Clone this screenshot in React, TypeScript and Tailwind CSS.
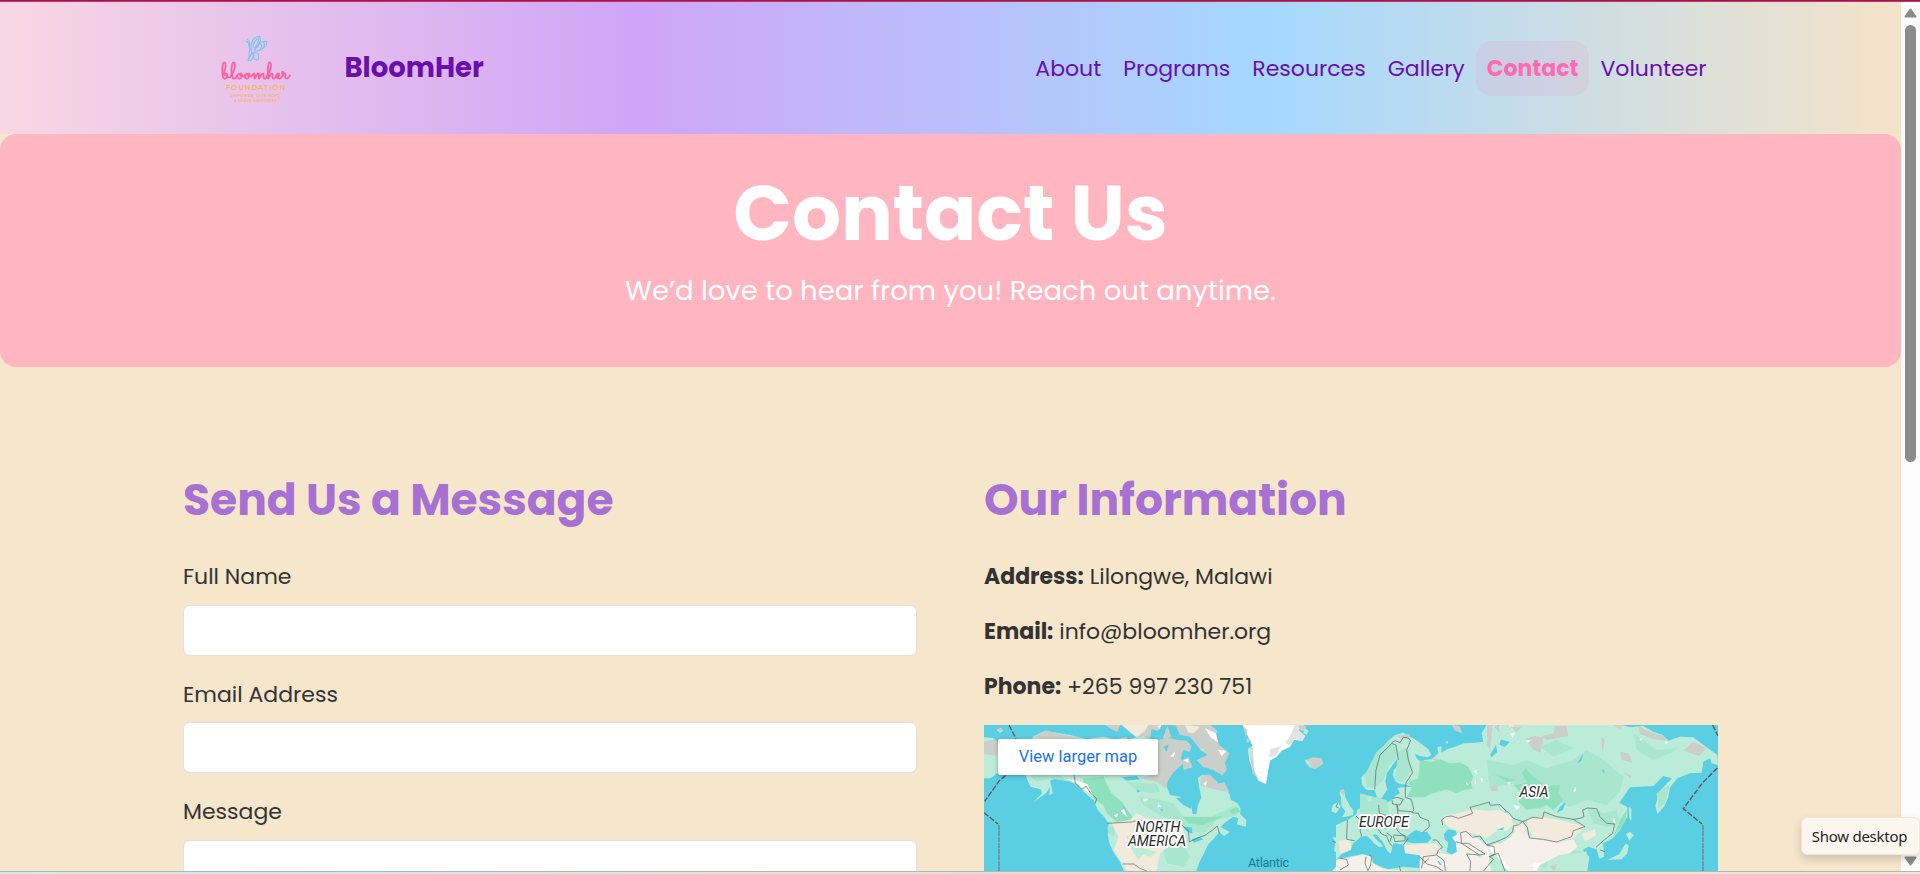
import type { ReactNode } from 'react';

const navItems = [
  { label: 'About', active: false },
  { label: 'Programs', active: false },
  { label: 'Resources', active: false },
  { label: 'Gallery', active: false },
  { label: 'Contact', active: true },
  { label: 'Volunteer', active: false },
];

function Logo() {
  return (
    <div className="flex w-[70px] shrink-0 flex-col items-center">
      <svg className="ml-[2px] h-[27px] w-[23px]" viewBox="0 0 69 81" fill="none" stroke="#74c6f4" strokeWidth="3.2" strokeLinecap="round" strokeLinejoin="round">
        <path d="M18 42C16 24 26 6 42 3C50 10 46 28 28 46" />
        <path d="M24 38C24 24 32 13 40 10C43 20 36 30 29 38" />
        <path d="M28 46C36 30 50 18 65 19C67 32 54 46 32 49" />
        <path d="M46 26C52 28 50 40 44 45M56 22C60 28 58 34 54 38" />
        <path d="M28 52C40 50 43 60 40 72C36 79 28 76 26 66C25 60 26 56 28 52Z" />
        <path d="M24 52C20 58 12 66 9 76C20 79 26 70 25 56" />
        <path d="M15 38C13 48 12 60 12 70M18 42C20 48 21 52 20 58" />
        <path d="M13 36C12 28 10 22 4 19M14 35C15 26 12 18 8 14" />
      </svg>
      <div className="h-[22px] whitespace-nowrap pt-[2px] font-['Sacramento','Dancing_Script',cursive] text-[23.8px] font-bold leading-[22px] text-[#fb62a0]">
        bloomher
      </div>
      <div className="ml-[1px] whitespace-nowrap font-['Montserrat','Lato',sans-serif] text-[7px] font-semibold leading-[7px] tracking-[1px] text-[#fdb260]">
        FOUNDATION
      </div>
      <div className="mt-[2px] whitespace-nowrap text-center font-['Lato',sans-serif] text-[4px] font-bold leading-[5px] tracking-[0.3px] text-[#fab36e]">
        EMPOWER, GIVE HOPE
        <br />
        &amp; LEAVE MEMORIES
      </div>
    </div>
  );
}

function Header() {
  return (
    <header className="h-[132px] bg-[linear-gradient(90deg,#f8d7e3_0%,#d0a5f7_33.3%,#a5d8ff_66.6%,#f5e3c8_100%)]">
      <div className="mx-auto flex h-full w-[1534px] items-start justify-between">
        <div className="flex items-start pl-[37px]">
          <div className="pt-[33px]">
            <Logo />
          </div>
          <span className="ml-[54px] mt-[49px] text-[27.5px] font-bold leading-[34px] text-[#6a0dad]">BloomHer</span>
        </div>
        <nav className="mt-[39px] flex">
          {navItems.map((item) => (
            <a
              key={item.label}
              className={
                item.active
                  ? 'rounded-2xl bg-[#ff69b4]/10 px-[11px] py-[9.5px] text-[22px] font-bold leading-9 text-[#ff69b4]'
                  : 'px-[11px] py-[9.5px] text-[22px] leading-9 text-[#6a0dad]'
              }
            >
              {item.label}
            </a>
          ))}
        </nav>
      </div>
    </header>
  );
}

function Hero() {
  return (
    <section className="flex h-[233px] flex-col items-center rounded-2xl bg-[#ffb6c1] pt-[33px] text-white">
      <h1 className="text-[77px] font-bold leading-[92px]">Contact Us</h1>
      <p className="mt-[9px] text-[27.5px] leading-[46px]">We’d love to hear from you! Reach out anytime.</p>
    </section>
  );
}

function Field({ label, children }: { label: string; children: ReactNode }) {
  return (
    <label className="mb-[21px] block">
      <span className="mb-[9.5px] block leading-9">{label}</span>
      {children}
    </label>
  );
}

function WorldMap() {
  return (
    <svg className="block h-[146px] w-[734px]" viewBox="0 0 734 146" preserveAspectRatio="xMinYMin slice">
      <rect width="734" height="146" fill="#5acfe4" />
      {/* Americas and the Atlantic */}
      <g transform="scale(.33333) translate(-42 -45)">
        <path fill="#bbecd9" d="M42 82L70 84L86 100L84 140L86 186L62 205L42 205ZM80 60L92 54L100 62L90 68Z" />
        <path fill="#cbcfca" d="M42 95L72 88L90 104L80 138L42 132ZM80 58L95 54L98 62L86 66Z" />
        <path fill="#bbecd9" d="M188 80L225 62L300 75L350 88L400 80L450 92L520 78L560 95L575 130L565 190L588 225L600 255L640 262L664 285L668 312L679 312L684 285L694 262L688 235L684 205L694 195L720 200L735 225L748 220L765 232L778 252L783 270L802 280L812 296L810 312L829 330L828 350L800 343L806 325L790 320L764 338L752 352L780 366L762 378L748 366L730 388L715 402L702 430L690 452L678 484L462 484L450 455L432 430L418 400L413 372L416 340L400 318L382 298L372 272L345 248L315 222L285 206L262 203L240 212L249 250L238 256L240 232L228 250L192 275L216 250L212 238L182 230L172 210L165 190L180 150L188 120Z" />
        <path fill="#cbcfca" d="M190 82L225 62L265 70L340 88L220 86ZM560 90L600 85L625 90L650 92L664 108L660 125L640 120L632 145L642 158L612 185L595 210L588 235L560 215L510 205L560 190ZM405 45L450 45L442 66L425 58ZM480 45L575 45L565 62L545 58L540 85L520 78L505 82ZM578 85L592 48L604 80L590 88ZM616 45L720 45L742 62L735 80L748 105L778 130L765 158L770 180L758 196L740 186L722 176L700 172L680 150L712 135L690 118L660 80L630 75ZM638 150L655 140L668 172L640 180ZM705 160L740 156L752 172L720 178ZM694 195L720 194L738 212L746 222L762 216L778 245L750 242L690 226ZM440 88L470 80L472 88Z" />
        <path fill="#f2eadc" d="M455 45L535 45L525 62L500 82L482 68ZM560 48L574 45L570 58ZM645 45L690 50L670 70L655 68Z" />
        <path fill="#8fe0bd" d="M338 205L400 200L425 250L455 275L490 325L520 330L440 335L412 312L400 285L372 268L345 230Z" />
        <path fill="#a8e6cf" d="M470 215L560 222L570 245L540 250L500 240ZM505 258L560 268L610 280L640 320L720 322L790 288L808 292L800 315L740 330L700 372L655 360L560 310L520 285ZM600 390L640 405L660 440L640 470L590 460L580 420ZM180 195L260 190L300 215L240 205L200 215ZM412 350L440 352L430 378L415 370Z" />
        <path fill="#8fe0bd" d="M640 320L720 322L760 318L700 345L655 340ZM778 302L800 290L812 305L790 314Z" />
        <path fill="#f2eadc" d="M425 340L480 330L500 310L530 325L640 345L640 395L600 405L570 430L560 484L470 484L458 462L432 420L445 380Z" />
        <path fill="#bbecd9" d="M470 375L500 410L560 425L540 440L520 432L505 450L490 425L475 400Z" />
        <path fill="#5acfe4" d="M580 110L596 104L590 125ZM640 200L656 185L648 196ZM618 265L655 258L668 285L662 296L640 285ZM638 350L665 352L668 372L652 366ZM665 388L690 380L700 388L672 398ZM448 158L470 168L458 172ZM455 202L500 198L510 208L470 212ZM500 238L512 244L502 248ZM570 296L582 300L574 304ZM458 285L470 306L462 302Z" />
        <path fill="#fff" d="M280 205L320 212L352 222L372 262L345 240L318 218ZM462 296L472 322L452 302ZM640 150L655 146L655 158ZM745 120L770 122L755 138ZM705 55L738 70L745 98L722 82ZM520 265L536 268L522 276ZM565 282L574 290L562 292ZM700 222L710 212L708 228ZM430 315L445 312L440 322ZM600 140L615 125L612 140Z" />
        <path fill="#fff" d="M818 45L1002 45L985 60L1005 78L998 92L972 90L960 110L935 122L920 140L900 152L895 180L888 222L866 212L850 185L838 150L835 118L848 108L835 82Z" />
        <path fill="#e2e3e3" d="M975 45L1002 45L985 60L1005 78L998 92L972 88L945 100L960 78ZM900 118L935 108L915 138L898 142ZM945 98L970 88L962 108Z" />
        <path fill="#cbcfca" d="M820 48L832 60L828 82L822 60ZM830 84L845 90L830 98ZM835 115L848 112L852 180L866 208L848 190ZM1008 150L1030 142L1055 145L1060 162L1035 178L1018 172ZM985 45L1008 48L1005 65L990 60Z" />
        <path fill="#bbecd9" d="M836 112L850 120L846 150L836 140ZM1004 148L1018 155L1025 175L1008 160ZM1004 55L1016 62L1010 74L1000 70ZM690 118L704 115L700 126Z" />
        <path fill="#bbecd9" d="M1108 248L1122 240L1126 262L1140 288L1152 304L1142 316L1114 322L1128 306L1116 290L1120 278ZM1088 285L1104 276L1112 290L1098 310L1084 304ZM1122 342L1150 318L1172 308L1172 484L1090 484L1118 460L1130 435L1115 432L1092 424L1096 396L1088 382L1130 384L1150 385L1140 360Z" />
        <path fill="#cbcfca" d="M1108 246L1122 238L1122 258Z" />
        <path fill="#f2eadc" d="M1108 392L1140 392L1138 415L1112 425ZM1110 458L1140 442L1172 436L1172 484L1085 484Z" />
        <g fill="none" stroke="#59615f" strokeWidth="2">
          <path d="M312 190L316 220L336 238L348 228L362 250L380 266L376 280M412 340L488 336M488 334L525 330M635 345L655 362L658 396L682 384L705 376L728 360L742 348L748 370M458 462L492 462L508 474L532 484M1088 394L1106 400L1102 428M1130 384L1160 390M1132 446L1138 466L1120 480M1104 278L1098 290L1106 294" />
        </g>
        <g fill="none" stroke="#6a4f58" strokeWidth="4">
          <path strokeDasharray="17 5" d="M117 45L138 86M108 196L88 212L44 274M42 308L84 342" />
          <path d="M87 345V484" stroke="#6f8890" strokeWidth="4.5" strokeDasharray="16 2" />
        </g>
      </g>
      {/* Eurasia and the Pacific */}
      <g transform="scale(.33333) translate(1068 -45)">
        <path fill="#bbecd9" d="M-12 345L22 330L48 318L52 300L84 280L86 258L96 268L100 282L130 285L158 268L165 258L180 250L172 235L196 230L228 232L200 225L180 222L168 215L158 195L162 180L178 160L170 148L158 165L140 190L136 215L142 238L125 265L112 265L104 240L80 240L66 225L64 202L82 185L100 150L120 120L142 95L165 75L190 68L214 82L240 98L265 118L274 135L262 142L240 138L226 132L228 142L246 160L252 150L275 148L295 130L292 112L304 108L304 128L322 118L345 110L372 100L405 98L430 95L425 70L440 45L470 45L486 75L478 105L495 110L510 96L480 88L468 60L478 45L845 45L870 52L910 48L940 65L968 75L985 92L1020 80L1060 82L1100 112L1132 135L1134 165L1115 160L1110 145L1090 155L1085 188L1050 190L1012 205L990 232L985 262L972 290L952 312L946 288L958 245L996 205L970 198L940 228L870 232L838 278L862 292L862 320L838 362L818 385L790 400L792 440L778 446L770 418L745 410L728 420L748 440L742 484L-12 484Z" />
        <path fill="#a8e6cf" d="M75 195L110 125L150 92L175 120L168 145L145 170L130 210L105 235L80 230ZM175 125L205 110L215 180L190 215L165 210ZM440 150L520 165L560 150L620 175L700 150L740 120L790 150L850 200L840 245L800 285L740 270L690 290L640 270L600 300L550 270L520 220L450 235ZM600 110L650 90L700 115L640 140ZM880 70L950 120L1010 115L1000 125L940 150L890 120ZM950 250L990 222L975 280L955 295ZM740 290L790 310L830 300L840 340L800 350L760 340ZM60 250L140 270L150 320L60 310ZM660 420L740 425L735 484L600 470Z" />
        <path fill="#8fe0bd" d="M240 150L275 156L300 148L330 160L362 158L385 170L400 200L392 218L398 236L370 240L350 250L320 238L300 244L272 252L255 262L200 262L215 235L205 215L235 205ZM520 225L545 222L560 215L545 190L556 175L575 195L600 215L622 228L660 225L655 248L670 270L640 300L620 285L590 295L560 300L535 275L548 250ZM470 195L530 210L500 215ZM840 330L860 300L856 335L820 380Z" />
        <path fill="#f2eadc" d="M310 318L345 312L395 298L445 302L480 300L512 318L520 345L500 362L470 362L440 385L400 370L358 365L325 350L308 336ZM560 328L600 320L650 328L720 345L735 350L700 385L650 396L580 385L562 350ZM725 372L765 358L768 375L735 395ZM195 405L290 400L305 425L240 440L195 428ZM-5 392L30 388L34 420L0 430ZM505 45L520 45L518 62ZM520 350L548 335L565 380L530 390Z" />
        <path fill="#f5f0e9" d="M-12 484L-12 450L70 434L95 438L100 462L130 478L240 484L240 436L305 430L330 435L345 410L340 375L370 362L420 390L445 412L490 390L535 362L580 386L650 397L700 388L712 410L690 430L650 440L600 465L590 484Z" />
        <path fill="#bbecd9" d="M450 425L470 440L492 462L505 484L455 484L446 455ZM620 455L660 435L740 425L738 484L620 484ZM470 395L510 370L515 378L480 402ZM405 430L425 435L420 442Z" />
        <path fill="#cbcfca" d="M336 45L358 48L368 70L345 62ZM440 45L458 45L450 118L442 108ZM462 50L475 45L480 70ZM555 85L585 78L610 82L602 128L580 120ZM605 78L640 70L645 48L680 48L685 78L650 85L620 90ZM785 80L795 90L786 135ZM822 45L850 45L840 58ZM895 48L935 68L970 78L980 92L940 88L900 72ZM1030 122L1060 95L1100 115L1078 138ZM842 125L865 130L878 158L845 150ZM850 185L875 198L872 206ZM450 228L468 225L476 240L455 245ZM172 78L210 72L206 86L180 86ZM510 50L545 50L530 65ZM0 240L12 238L10 262ZM272 145L298 146L285 152ZM630 470L650 462L645 484Z" />
        <path fill="#5acfe4" d="M195 385L212 370L228 360L245 366L262 366L275 385L262 398L222 400L200 396ZM312 372L325 358L348 362L350 375L335 382L348 398L350 425L335 434L320 425L325 398L314 388ZM-12 450L5 432L32 420L38 402L62 380L80 378L92 388L104 402L120 412L130 408L108 388L98 375L108 372L128 395L140 420L152 432L160 400L190 404L195 430L240 436L238 474L190 470L145 478L118 468L98 458L96 440L68 432L20 442L-12 448ZM660 290L678 275L668 300L650 308ZM492 290L500 308L496 308ZM468 360L492 352L490 360ZM290 448L306 464L300 466ZM785 178L795 182L792 192ZM712 160L730 130L724 152ZM450 135L468 105L472 125L455 142Z" />
        <path fill="#bbecd9" d="M2 250L16 265L20 285L38 302L40 315L8 322L18 300L5 290ZM866 290L874 296L874 332L868 325ZM858 372L870 365L882 376L868 392ZM856 402L866 405L862 430L845 448L802 450L838 432ZM80 264L92 258L96 272L84 275ZM315 95L324 94L322 102Z" />
        <path fill="#fff" d="M400 185L408 180L412 192ZM510 70L524 68L518 84ZM556 92L572 90L566 98ZM420 205L430 206L424 216ZM700 245L706 230L708 244ZM500 218L512 216L508 224ZM452 408L464 412L462 432L450 425ZM576 462L600 458L590 484L580 478ZM820 320L828 340L820 335ZM468 430L490 445L512 484L492 470ZM520 285L540 290L530 300ZM545 352L556 360L548 362ZM898 88L906 84L904 94ZM975 92L985 98L976 102ZM405 210L410 222L404 222ZM565 238L576 244L566 246ZM380 215L385 225L378 222Z" />
        <g fill="none" stroke="#59615f" strokeWidth="2" strokeLinejoin="round">
          <path d="M104 238L108 180L120 135L155 100L168 105L175 150M155 98L165 92L180 98L190 82L205 84L212 92L200 120L205 150L218 188L198 218L196 232L196 262L214 268L222 300L215 308L235 310L240 322L266 332L268 350L250 366M158 265L172 262L190 268L180 285L158 282L156 270M172 285L175 302L215 305M116 285L118 310L142 318L175 318L170 285M48 318L60 330L72 345L60 360L65 380M22 330L20 388L44 392M118 348L140 356L165 350L180 370L200 380M110 352L125 372L140 378L148 398L158 410M140 368L155 380L150 395M160 375L195 378L195 392L165 395L160 378" />
          <path d="M308 345L305 330L318 320L335 318L355 325L385 315L398 310L390 292L418 285L448 276L450 286L480 284L495 300L508 310L520 325L548 335L535 345L520 348L518 365L500 382L470 395L440 405L420 378L398 382L378 364L362 368L364 400L348 395M364 400L385 400L435 432L418 435L365 400M440 405L462 410L465 432L448 440L460 448L430 484M418 435L380 432L392 455L390 484M448 440L475 430L495 484M548 335L578 322L608 325L612 306L650 320L700 328L735 350L700 362L695 380L650 396L610 388L568 384L562 352L548 335M700 328L720 325L732 320L728 300L742 294L770 296L780 320L800 340L824 342L818 370L790 392L768 412M780 420L795 425M245 475L250 440L290 435L295 420L308 412L290 390L278 390M290 435L312 452L316 484M240 440L260 462L290 470L310 484M250 460L268 445M0 445L20 448L25 465L0 480M78 440L75 460L85 484M88 435L95 440L92 465L85 480M178 468L182 484M205 385L190 405" />
        </g>
        <g fill="none" stroke="#6a4f58" strokeWidth="4">
          <path strokeDasharray="17 5" d="M1118 45L1134 78M1132 174L1088 218L1030 296L1086 342" />
          <path d="M1089 345V484" stroke="#6f8890" strokeWidth="4.5" strokeDasharray="16 2" />
        </g>
      </g>
      <g fontFamily="Roboto, sans-serif" fontSize="14.3" fontStyle="italic" fontWeight="400" fill="#2b2b2b" stroke="#fff" strokeWidth="3.5" strokeLinejoin="round" paintOrder="stroke" textAnchor="middle">
        <text x="174" y="107" textLength="45">NORTH</text>
        <text x="173" y="120.5" textLength="58">AMERICA</text>
        <text x="400" y="102" textLength="50">EUROPE</text>
        <text x="550" y="72" textLength="29">ASIA</text>
      </g>
      <g fontFamily="Roboto, sans-serif" fontSize="12.5" fill="#167a8b" textAnchor="middle">
        <text x="284.5" y="142" textLength="41">Atlantic</text>
        <text x="284.5" y="155">Ocean</text>
      </g>
    </svg>
  );
}

function Information() {
  const details = [
    ['Address:', 'Lilongwe, Malawi'],
    ['Email:', 'info@bloomher.org'],
    ['Phone:', '+265 997 230 751'],
  ];
  return (
    <section className="w-[734px]">
      <h2 className="mb-8 text-[44px] font-bold leading-[54px] text-[#a770d3]">Our Information</h2>
      {details.map(([name, value]) => (
        <p key={name} className="mb-[19px] leading-9">
          <strong className="font-bold">{name}</strong> {value}
        </p>
      ))}
      <div className="relative mt-5 h-[146px] overflow-hidden">
        <WorldMap />
        <a className="absolute left-[14px] top-[14px] flex h-9 w-40 items-center justify-center rounded-[2px] bg-white font-['Roboto',sans-serif] text-[16.5px] leading-none text-[#1a73e8] shadow-[0_1px_4px_rgba(0,0,0,0.3)]">
          View larger map
        </a>
      </div>
    </section>
  );
}

function MessageForm() {
  const box = 'block w-full rounded-[7px] border border-[#dee2e6] bg-white outline-none';
  return (
    <form className="w-[734px]">
      <h2 className="mb-8 text-[44px] font-bold leading-[54px] text-[#a770d3]">Send Us a Message</h2>
      <Field label="Full Name">
        <input className={`${box} h-[51px]`} />
      </Field>
      <Field label="Email Address">
        <input className={`${box} h-[51px]`} />
      </Field>
      <Field label="Message">
        <textarea className={`${box} h-40 resize-none`} />
      </Field>
    </form>
  );
}

function Scrollbar() {
  return (
    <div className="flex w-[19px] shrink-0 flex-col items-center bg-[#fcfcfc] pb-[5px] pt-[6px]">
      <svg className="h-[10px] w-[13px]" viewBox="0 0 13 10">
        <path d="M6.5 1.5L11.5 8.5H1.5Z" fill="#8b8b8b" stroke="#8b8b8b" strokeWidth="2" strokeLinejoin="round" />
      </svg>
      <div className="mt-[7px] h-[437px] w-[11px] rounded-full bg-[#8b8b8b]" />
      <svg className="mt-auto h-[10px] w-[13px]" viewBox="0 0 13 10">
        <path d="M6.5 8.5L11.5 1.5H1.5Z" fill="#8b8b8b" stroke="#8b8b8b" strokeWidth="2" strokeLinejoin="round" />
      </svg>
    </div>
  );
}

export default function App() {
  return (
    <div className="relative flex h-[874px] w-[1920px] flex-col overflow-hidden bg-[#f5e6cc] font-['Poppins','Inter',sans-serif] text-[22px] text-[#333]">
      <div className="h-[2px] shrink-0 border-b border-[#b8386c] bg-[#a3134c]" />
      <div className="flex h-[869px] shrink-0">
        <div className="h-full w-[1901px] overflow-hidden">
          <Header />
          <Hero />
          <main className="flex justify-between px-[183px] pt-[106px]">
            <MessageForm />
            <Information />
          </main>
        </div>
        <Scrollbar />
      </div>
      <div className="h-[3px] shrink-0 border-t border-[#b3b5ae] bg-[linear-gradient(90deg,#d5e8f2,#e3e3dc_40%,#e6dcd8_60%,#ebe8d5)]" />
      <div className="absolute left-[1801px] top-[817px] flex h-[38px] w-[119px] items-center justify-center rounded-md border border-[#efe7da] bg-[#fbf7ef] pr-[2px] font-['Noto_Sans',sans-serif] text-[15px] leading-none tracking-[-0.25px] text-[#1f1f1f] shadow-[0_4px_8px_rgba(0,0,0,0.16)]">
        Show desktop
      </div>
    </div>
  );
}
